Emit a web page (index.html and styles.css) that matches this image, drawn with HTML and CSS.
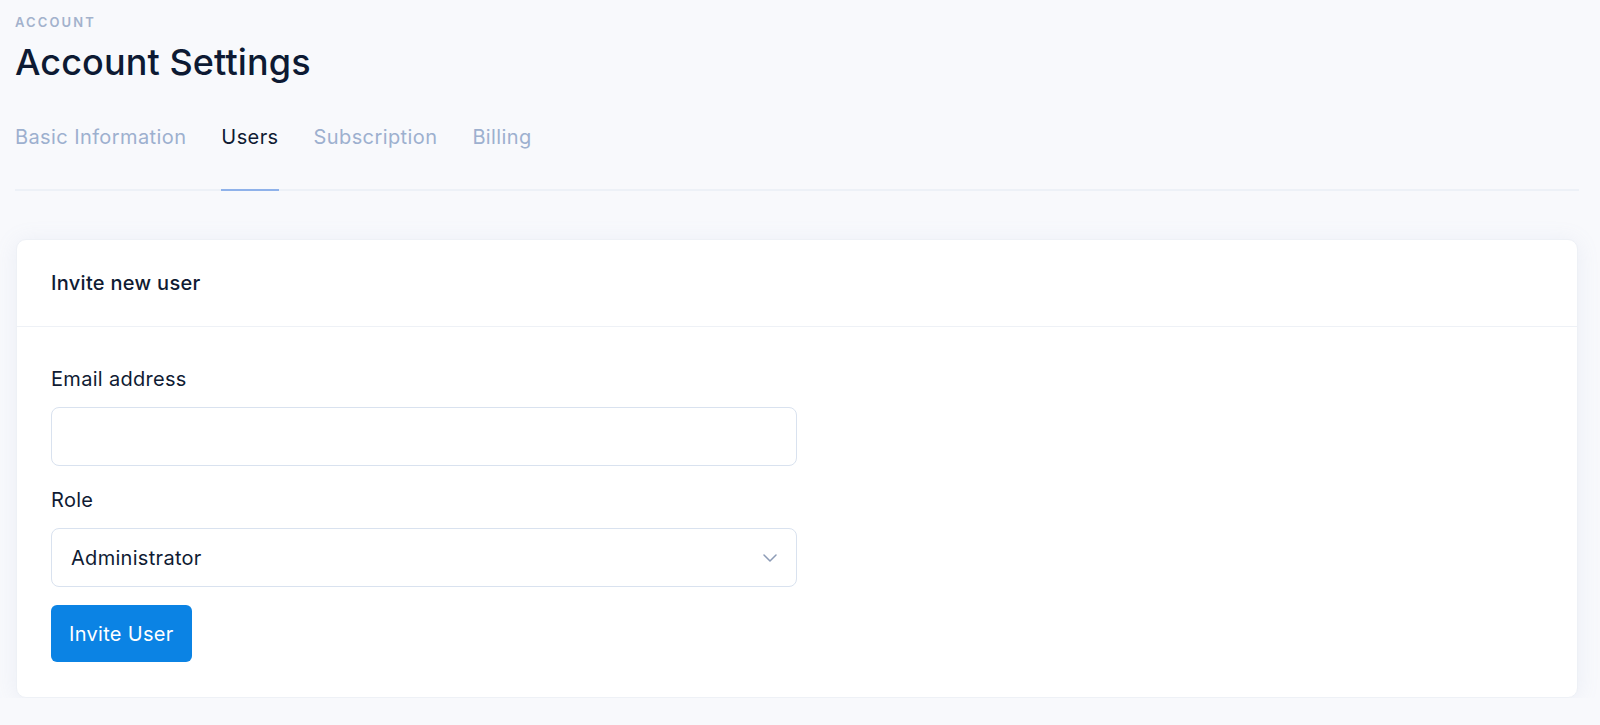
FILE: index.html
```html
<!DOCTYPE html>
<html lang="en">
<head>
<meta charset="utf-8">
<title>Account Settings</title>
<link rel="stylesheet" href="styles.css">
</head>
<body>
<div class="page">
  <div class="eyebrow">ACCOUNT</div>
  <h1 class="title">Account Settings</h1>
  <nav class="tabs">
    <a class="tab">Basic Information</a>
    <a class="tab active">Users</a>
    <a class="tab">Subscription</a>
    <a class="tab">Billing</a>
  </nav>
  <section class="card">
    <div class="card-header">Invite new user</div>
    <div class="card-body">
      <div class="field">
        <label class="label">Email address</label>
        <input class="control" type="email">
      </div>
      <div class="field">
        <label class="label">Role</label>
        <div class="select-wrap">
          <select class="control select">
            <option>Administrator</option>
          </select>
          <svg class="chevron" width="14" height="8" viewBox="0 0 14 8"><path d="M1 1l6 6 6-6" fill="none" stroke="#8c9bb6" stroke-width="1.5" stroke-linecap="round" stroke-linejoin="round"/></svg>
        </div>
      </div>
      <button class="btn" type="button">Invite User</button>
    </div>
  </section>
</div>
</body>
</html>
```

FILE: styles.css
```css
* { box-sizing: border-box; }
html, body { margin: 0; padding: 0; }
body {
  background: #f8f9fc;
  font-family: Inter, "Liberation Sans", sans-serif;
  color: #0f1b33;
}
.page {
  padding: 14px 21px 0 15px;
}
.eyebrow {
  font-size: 13px;
  line-height: 17px;
  letter-spacing: 2.1px;
  font-weight: 600;
  color: #a3b2cc;
}
.title {
  margin: 9px 0 0;
  font-size: 36px;
  line-height: 44px;
  font-weight: 500;
  letter-spacing: 0.1px;
  color: #0d1a33;
}
.tabs {
  margin-top: 39px;
  display: flex;
  gap: 35px;
  border-bottom: 2px solid #edf1f7;
}
.tab {
  font-size: 20px;
  line-height: 28px;
  letter-spacing: 0.4px;
  padding-bottom: 38px;
  color: #9db0cf;
  border-bottom: 2px solid transparent;
  margin-bottom: -2px;
}
.tab.active {
  color: #0f1b33;
  border-bottom-color: #8fb2ea;
}
.card {
  margin: 48px 1px 0;
  background: #fff;
  border: 1px solid #eef1f6;
  border-radius: 10px;
  box-shadow: 0 2px 22px rgba(140, 160, 195, 0.12);
}
.card-header {
  padding: 29px 34px;
  font-size: 20px;
  line-height: 28px;
  font-weight: 500;
  letter-spacing: 0.3px;
  color: #0f1b33;
  border-bottom: 1px solid #eef1f6;
}
.card-body {
  padding: 38px 34px 35px;
}
.field {
  margin-bottom: 20px;
}
.label {
  display: block;
  font-size: 20px;
  line-height: 28px;
  letter-spacing: 0.3px;
  margin-bottom: 14px;
  color: #0f1b33;
}
.control {
  display: block;
  width: 50%;
  height: 59px;
  border: 1px solid #d9e2ef;
  border-radius: 8px;
  background: #fff;
  font-family: inherit;
  font-size: 20px;
  letter-spacing: 0.3px;
  color: #0f1b33;
  padding: 0 19px;
  outline: none;
}
.select-wrap {
  position: relative;
}
.select {
  width: 50%;
  appearance: none;
  -webkit-appearance: none;
}
.chevron {
  position: absolute;
  left: calc(50% - 34px);
  top: 26px;
}
.btn {
  display: block;
  margin-top: -2px;
  height: 57px;
  padding: 0 18px;
  border: none;
  border-radius: 6px;
  background: #0b83e4;
  color: #fff;
  font-family: inherit;
  font-size: 20px;
  letter-spacing: 0.3px;
}
```
